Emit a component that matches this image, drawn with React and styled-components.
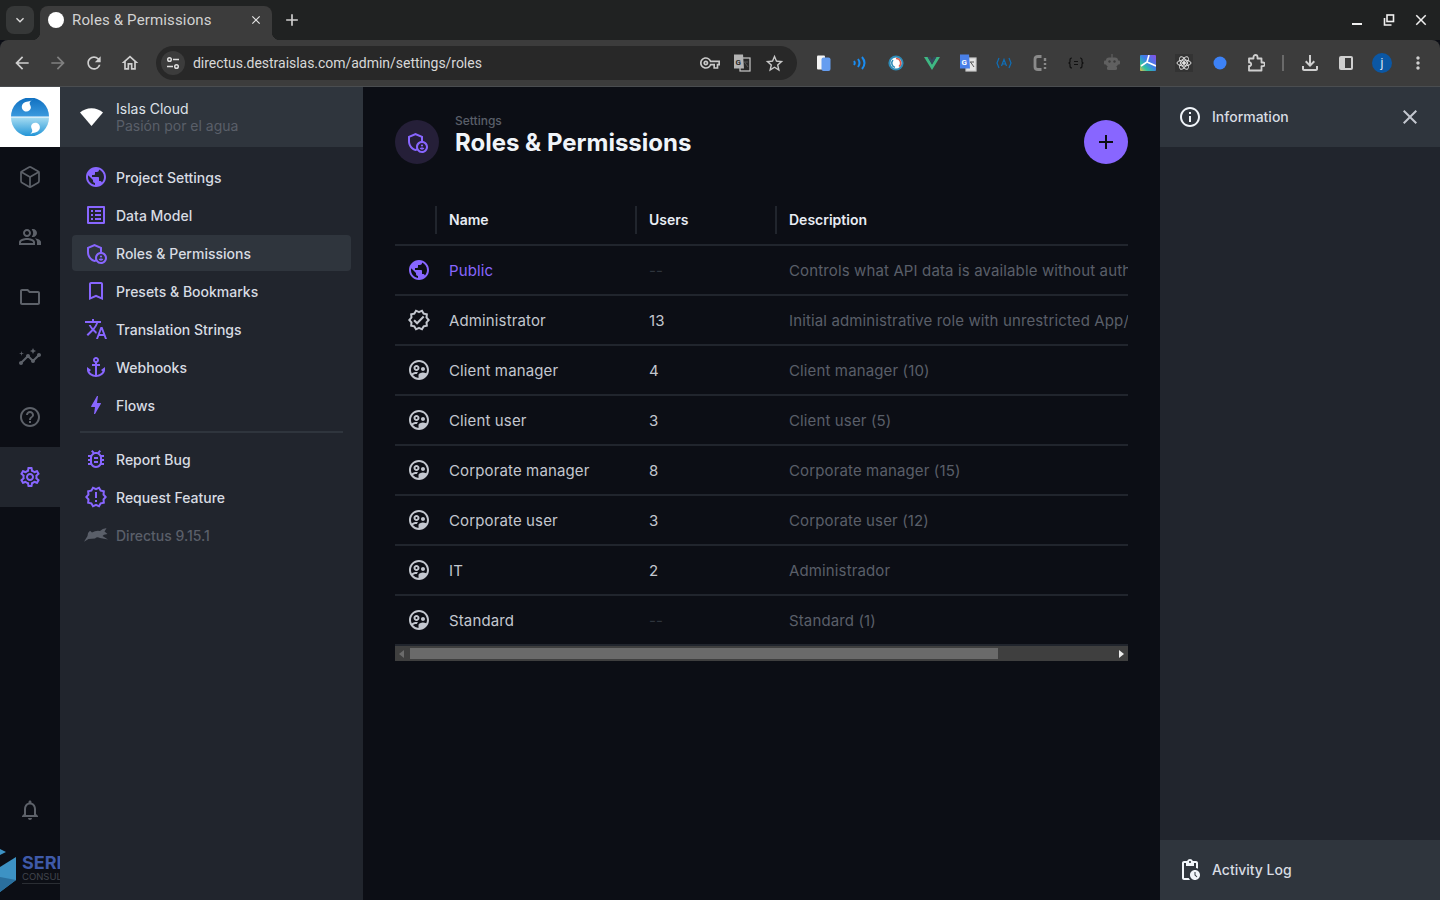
import React from "react";
import styled, { createGlobalStyle } from "styled-components";
import { Box } from "lucide-react";
import {
  MdAdd,
  MdAnchor,
  MdArrowBack,
  MdArrowForward,
  MdBolt,
  MdBookmarkBorder,
  MdClose,
  MdExpandMore,
  MdHelpOutline,
  MdInsights,
  MdMoreVert,
  MdOutlineAdminPanelSettings,
  MdOutlineBugReport,
  MdOutlineFileDownload,
  MdOutlineFolder,
  MdOutlineHome,
  MdOutlineInfo,
  MdOutlineListAlt,
  MdOutlineNewReleases,
  MdOutlineNotifications,
  MdOutlinePendingActions,
  MdOutlinePeopleAlt,
  MdOutlineSettings,
  MdOutlineStarBorder,
  MdOutlineSupervisedUserCircle,
  MdOutlineVerified,
  MdOutlineVpnKey,
  MdPublic,
  MdRefresh,
  MdTranslate,
} from "react-icons/md";

const Global = createGlobalStyle`
  html, body { margin: 0; padding: 0; background: #0c0e15; }
  body { font-family: "Inter", "Liberation Sans", sans-serif; overflow: hidden; }
  * { box-sizing: border-box; }
`;

const Page = styled.div`
  width: 1440px;
  height: 900px;
  display: flex;
  flex-direction: column;
  overflow: hidden;
`;

/* browser chrome */
const TabStrip = styled.div`
  height: 40px;
  flex: none;
  background: #202222;
  display: flex;
  align-items: flex-end;
  padding-left: 6px;
  font-family: "Roboto", "Liberation Sans", sans-serif;
`;

const TabSearch = styled.div`
  width: 28px;
  height: 28px;
  margin: 0 6px 6px 0;
  border-radius: 8px;
  background: #363838;
  color: #dcdcdc;
  display: flex;
  align-items: center;
  justify-content: center;
`;

const Tab = styled.div`
  position: relative;
  width: 232px;
  height: 34px;
  background: #3c3c3c;
  border-radius: 8px 8px 0 0;
  display: flex;
  align-items: center;
  padding: 0 9px 6px 8px;
  color: #d2d2d2;
  font-size: 15px;
  letter-spacing: 0.15px;
  &::before,
  &::after {
    content: "";
    position: absolute;
    bottom: 0;
    width: 8px;
    height: 8px;
    background: radial-gradient(circle at 0 0, #202222 8px, #3c3c3c 8.5px);
  }
  &::before {
    left: -8px;
  }
  &::after {
    right: -8px;
    transform: scaleX(-1);
  }
`;

const Favicon = styled.span`
  width: 16px;
  height: 16px;
  border-radius: 50%;
  background: #fff;
  margin-right: 8px;
  flex: none;
`;

const TabTitle = styled.span`
  flex: 1;
`;

const NewTab = styled.div`
  margin: 0 0 3px 10px;
  height: 34px;
  display: flex;
  align-items: center;
  color: #d0d0d0;
`;

const WindowControls = styled.div`
  margin-left: auto;
  height: 40px;
  display: flex;
  align-items: center;
  padding-right: 3px;
  color: #f0f0f0;
`;

const WindowButton = styled.span`
  width: 32px;
  display: flex;
  justify-content: center;
`;

const Toolbar = styled.div`
  height: 47px;
  flex: none;
  background: #3c3c3c;
  border-radius: 8px 8px 0 0;
  border-bottom: 1px solid #4a4d50;
  display: flex;
  align-items: center;
  padding: 0 4px;
  font-family: "Roboto", "Liberation Sans", sans-serif;
`;

const ToolButton = styled.span`
  width: 36px;
  height: 36px;
  flex: none;
  display: flex;
  align-items: center;
  justify-content: center;
  color: ${({ $dim }) => ($dim ? "#808080" : "#cfcfcf")};
`;

const Omnibox = styled.div`
  width: 641px;
  height: 34px;
  margin: 0 9px 0 8px;
  flex: none;
  border-radius: 17px;
  background: #282828;
  display: flex;
  align-items: center;
  padding: 0 7px 0 5px;
  color: #d8d8d8;
  font-size: 14px;
  letter-spacing: -0.03px;
`;

const SiteInfo = styled.span`
  width: 24px;
  height: 24px;
  border-radius: 50%;
  background: #3c3c3c;
  margin-right: 8px;
  flex: none;
  display: flex;
  align-items: center;
  justify-content: center;
`;

const Url = styled.span`
  flex: 1;
`;

const OmniIcon = styled.span`
  width: 32px;
  display: flex;
  justify-content: center;
  color: #c8c8c8;
`;

const ToolSeparator = styled.span`
  width: 2px;
  height: 16px;
  margin: 0 8px;
  background: #6a6a6a;
  flex: none;
`;

const Avatar = styled.span`
  width: 20px;
  height: 20px;
  border-radius: 50%;
  background: #0b57a4;
  color: #dfe8f5;
  font-size: 12px;
  display: flex;
  align-items: center;
  justify-content: center;
`;

/* app */
const App_Body = styled.div`
  flex: 1;
  display: flex;
  min-height: 0;
`;

const ModuleBar = styled.nav`
  width: 60px;
  flex: none;
  background: #0c0e15;
  display: flex;
  flex-direction: column;
  overflow: hidden;
`;

const LogoCell = styled.div`
  width: 60px;
  height: 60px;
  background: #fff;
  display: flex;
  align-items: center;
  justify-content: center;
  flex: none;
`;

const Module = styled.div`
  width: 60px;
  height: 60px;
  flex: none;
  display: flex;
  align-items: center;
  justify-content: center;
  color: ${({ $active }) => ($active ? "#8866ff" : "#5d6169")};
  background: ${({ $active }) => ($active ? "#21252d" : "transparent")};
`;

const ModuleBell = styled(Module)`
  margin-top: auto;
`;

const BrandCell = styled.div`
  width: 60px;
  height: 60px;
  flex: none;
`;

const Sidebar = styled.aside`
  width: 303px;
  flex: none;
  background: #21252d;
  display: flex;
  flex-direction: column;
`;

const ProjectHeader = styled.div`
  height: 60px;
  flex: none;
  background: #2f353d;
  display: flex;
  align-items: center;
  padding-left: 20px;
  gap: 12px;
`;

const ProjectText = styled.div`
  display: flex;
  flex-direction: column;
  font-size: 14px;
  line-height: 17px;
  color: #dde1e8;
  margin-left: 1px;
`;

const ProjectSub = styled.span`
  color: #5a5f69;
`;

const SideList = styled.div`
  padding: 12px 12px 0;
  display: flex;
  flex-direction: column;
  gap: 2px;
`;

const SideItem = styled.div`
  height: 36px;
  border-radius: 4px;
  display: flex;
  align-items: center;
  padding-left: 12px;
  gap: 8px;
  font-size: 14px;
  font-weight: 500;
  color: ${({ $muted }) => ($muted ? "#5a5f69" : "#d8dce3")};
  background: ${({ $active }) => ($active ? "#2f353d" : "transparent")};
  svg {
    color: ${({ $muted }) => ($muted ? "#5a5f69" : "#8866ff")};
    flex: none;
  }
`;

const SideDivider = styled.hr`
  border: 0;
  height: 2px;
  margin: 6px 8px;
  background: #2f353d;
  width: calc(100% - 16px);
`;

const Main = styled.main`
  flex: 1;
  min-width: 0;
  background: #0c0e15;
  padding: 0 32px;
`;

const PageHeader = styled.header`
  height: 108px;
  display: flex;
  align-items: center;
  padding-bottom: 2px;
`;

const TitleIcon = styled.div`
  width: 44px;
  height: 44px;
  border-radius: 50%;
  background: #251f38;
  color: #8866ff;
  display: flex;
  align-items: center;
  justify-content: center;
  margin: 4px 16px 0 0;
  flex: none;
`;

const TitleBlock = styled.div`
  display: flex;
  flex-direction: column;
  flex: 1;
  margin-bottom: 9px;
`;

const Breadcrumb = styled.span`
  font-size: 12px;
  line-height: 14px;
  font-weight: 500;
  color: #5a5f69;
`;

const Title = styled.h1`
  margin: 0;
  font-size: 24px;
  line-height: 29px;
  font-weight: 700;
  color: #f0f4f9;
`;

const AddButton = styled.div`
  width: 44px;
  height: 44px;
  margin-top: 4px;
  border-radius: 50%;
  background: #8866ff;
  color: #0c0e15;
  display: flex;
  align-items: center;
  justify-content: center;
  flex: none;
`;

const Table = styled.div`
  width: 733px;
  overflow: hidden;
`;

const Row = styled.div`
  display: grid;
  grid-template-columns: 40px 200px 140px 1fr;
  height: ${({ $head }) => ($head ? "51px" : "50px")};
  border-bottom: 2px solid #21252d;
  align-items: center;
  font-size: 15px;
  letter-spacing: 0.13px;
  color: #c3c7cf;
`;

const HeadCell = styled.div`
  height: 28px;
  border-left: 2px solid #21252d;
  padding-left: 12px;
  display: flex;
  align-items: center;
  font-size: 14px;
  font-weight: 600;
  letter-spacing: 0;
  color: #e8ecf3;
`;

const IconCell = styled.div`
  padding-left: 12px;
  display: flex;
  color: ${({ $public }) => ($public ? "#8866ff" : "#c3c7cf")};
`;

const Cell = styled.div`
  padding-left: 14px;
  white-space: nowrap;
  overflow: hidden;
  color: ${({ $public, $muted }) =>
    $public ? "#8866ff" : $muted ? "#5a5f69" : "inherit"};
  ${({ $faint }) => $faint && "color: #2f353d;"}
`;

const ScrollBar = styled.div`
  height: 15px;
  background: #3f3f3f;
  display: flex;
  align-items: center;
  padding: 0 4px;
`;

const Arrow = styled.span`
  width: 0;
  height: 0;
  border-top: 4px solid transparent;
  border-bottom: 4px solid transparent;
  ${({ $left }) =>
    $left ? "border-right: 5px solid #6b6b6b;" : "border-left: 5px solid #ececec;"}
  flex: none;
`;

const Thumb = styled.span`
  width: 588px;
  height: 11px;
  margin: 0 auto 0 6px;
  background: #6a6a6a;
`;

const InfoPanel = styled.aside`
  width: 280px;
  flex: none;
  background: #21252d;
  display: flex;
  flex-direction: column;
`;

const InfoHeader = styled.div`
  height: 60px;
  flex: none;
  background: #2f353d;
  display: flex;
  align-items: center;
  padding: 0 18px;
  gap: 10px;
  font-size: 14px;
  font-weight: 500;
  color: #d8dce3;
`;

const InfoLabel = styled.span`
  margin-bottom: 2px;
`;

const CloseIcon = styled.span`
  margin-left: auto;
  display: flex;
  color: #c3c7cf;
`;

const InfoBody = styled.div`
  flex: 1;
`;

const Rabbit = () => (
  <svg width="24" height="24" viewBox="0 0 24 24" fill="currentColor">
    <path d="M0 18.7L3.5 13Q3.5 9.5 6 7.8L8 9.5Q12 7.2 16 8 19 5 22.5 5.3L20.5 8.5 23.5 11 20 11.8 18.5 13 24 16.5 16 15Q13 13.5 11 15.5L4.5 16z" />
  </svg>
);

const WifiMark = () => (
  <svg width="23" height="18" viewBox="0 0 23 18" fill="#fff">
    <path d="M11.5 18 0 4.6C3 1.8 7 .2 11.5.2S20 1.8 23 4.6z" />
  </svg>
);

const IslandLogo = () => (
  <svg width="38" height="38" viewBox="0 0 38 38">
    <defs>
      <linearGradient id="top" x1="0" y1="0" x2="0" y2="1">
        <stop offset="0" stopColor="#0f6fc0" />
        <stop offset="1" stopColor="#3b9ade" />
      </linearGradient>
      <linearGradient id="bottom" x1="0" y1="0" x2="0" y2="1">
        <stop offset="0" stopColor="#a6dcf2" />
        <stop offset="1" stopColor="#1f93d6" />
      </linearGradient>
    </defs>
    <path d="M0 18.5A19 19 0 0 1 38 18.5z" fill="url(#top)" />
    <path d="M0 19.5A19 19 0 0 0 38 19.5z" fill="url(#bottom)" />
    <path d="M21.5 1c-1 3-5 1.8-8 3.6-3.4 2-3.6 6.2-.4 8.4 3 1.6 6.8-.4 6.8-3.4 0-2.2-1.6-3-1.2-4.8.3-1.4 2-2.2 2.8-3.8z" fill="#fff" />
    <path d="M19 37c1-2.6 4.6-1.8 7.6-3.6 3.2-2 3-6.6-.1-8.2-3-1.4-6.4.4-6.4 3.2 0 2 1.5 3 1.1 4.8-.3 1.3-1.6 2.2-2.2 3.8z" fill="#fff" />
  </svg>
);

const BrandMark = () => (
  <svg width="60" height="60" viewBox="0 0 60 60">
    <path d="M0 9l6 3-6 3z" fill="#3d92c4" />
    <path d="M0 27L16 17V40L0 52z" fill="#3d92c4" />
    <path d="M0 37l16 3L0 52z" fill="#2a6f9e" />
    <text x="22" y="29" fontFamily="Inter, sans-serif" fontWeight="700" fontSize="18" fill="#3f5aa8">
      SERI
    </text>
    <text x="22" y="40" fontFamily="Inter, sans-serif" fontSize="9.5" fill="#41454d">
      CONSULTING
    </text>
    <path d="M22 43.5h38" stroke="#2a2d33" strokeWidth="1" />
  </svg>
);

const TranslatePage = ({ color }) => (
  <svg width="20" height="20" viewBox="0 0 20 20">
    <rect x="8" y="5" width="10" height="13" fill={color === "blue" ? "#e4e4e4" : "none"} stroke="#c8c8c8" strokeWidth="1.2" />
    <path d="M2 1.5h9l1 14H2z" fill={color === "blue" ? "#4a80e8" : "#b4b4b4"} />
    <text x="3.6" y="11.5" fontFamily="Roboto, sans-serif" fontWeight="700" fontSize="8" fill={color === "blue" ? "#fff" : "#282828"}>
      G
    </text>
    <path d="M12.5 9l3.5 5M16 9h-4" stroke="#555" strokeWidth="1" fill="none" />
  </svg>
);

/* extension icons on the toolbar */
const extensions = [
  <svg width="16" height="18" viewBox="0 0 16 18">
    <rect x="1" y="1.5" width="8" height="14" rx="1" fill="#f5f5f5" />
    <rect x="5.5" y="3.5" width="9" height="13.5" rx="2" fill="#659df0" />
  </svg>,
  <svg width="16" height="16" viewBox="0 0 16 16" fill="none" stroke="#1a8cf0" strokeWidth="2">
    <path d="M2 6q1.5 2 0 4M6 4q3 4 0 8M10 2q5 6 0 12" />
  </svg>,
  <svg width="16" height="16" viewBox="0 0 16 16" fill="none">
    <circle cx="8" cy="8" r="7.6" fill="#2d8bb8" />
    <circle cx="8" cy="8" r="5.5" fill="#fff" />
    <path d="M8 3.5a4.5 4.5 0 0 1 3 8" stroke="#e0584a" strokeWidth="1.5" />
    <path d="M7 12.4A4.5 4.5 0 0 1 5 5" stroke="#2d8bb8" strokeWidth="1.5" />
  </svg>,
  <svg width="16" height="16" viewBox="0 0 16 16">
    <path d="M0 2h3.6L8 9.5 12.4 2H16L8 15z" fill="#3fb883" />
    <path d="M3.6 2h2.6L8 5l1.8-3h2.6L8 9.5z" fill="#34495e" />
  </svg>,
  <TranslatePage color="blue" />,
  <svg width="16" height="16" viewBox="0 0 16 16" fill="none" stroke="#0f6fb8" strokeWidth="1.2">
    <path d="M3 3 1 8l2 5M13 3l2 5-2 5M5.5 11 8 4.5l2.5 6.5M6.3 9h3.4" />
  </svg>,
  <svg width="16" height="18" viewBox="0 0 16 18" fill="none" stroke="#8a8a8a" strokeWidth="2.8">
    <path d="M9.5 2.5H6Q3 2.5 3 5v8q0 2.500 3 2.500h3.500" />
    <path d="M13 4v3M13 9v2M13 13v2" strokeWidth="2.4" />
  </svg>,
  <svg width="16" height="12" viewBox="0 0 16 12" fill="none" stroke="#111" strokeWidth="1.2">
    <path d="M4 1Q2 1 2 3v2L1 6l1 1v2q0 2 2 2M12 1q2 0 2 2v2l1 1-1 1v2q0 2-2 2M6 4.500h4M6 7.500h4" />
  </svg>,
  <svg width="18" height="18" viewBox="0 0 18 18" fill="#606060">
    <rect x="8.400" y="0" width="1.200" height="4" />
    <rect x="3" y="3.500" width="12" height="9" rx="3" />
    <rect x="1" y="6.500" width="16" height="4" rx="1" />
    <rect x="4" y="12" width="10" height="4" rx="1.500" />
    <circle cx="6.500" cy="7.500" r="1.200" fill="#3c3c3c" />
    <circle cx="11.500" cy="7.500" r="1.200" fill="#3c3c3c" />
  </svg>,
  <svg width="16" height="16" viewBox="0 0 16 16">
    <defs>
      <linearGradient id="ext" x1="1" y1="0" x2="0" y2="1">
        <stop offset="0" stopColor="#8a4fe8" />
        <stop offset="0.45" stopColor="#3c7fe8" />
        <stop offset="0.75" stopColor="#2fc4a0" />
        <stop offset="1" stopColor="#e8b84a" />
      </linearGradient>
    </defs>
    <rect width="16" height="16" rx="1" fill="url(#ext)" />
    <path d="M9 0 7 7l-6 4M7 7l9 4" stroke="#fff" strokeWidth="1.600" fill="none" />
  </svg>,
  <svg width="18" height="18" viewBox="0 0 18 18" fill="none" stroke="#e0e0e0" strokeWidth="1">
    <rect width="18" height="18" fill="#333" stroke="none" />
    <ellipse cx="9" cy="9" rx="7" ry="3" />
    <ellipse cx="9" cy="9" rx="7" ry="3" transform="rotate(60 9 9)" />
    <ellipse cx="9" cy="9" rx="7" ry="3" transform="rotate(120 9 9)" />
    <circle cx="9" cy="9" r="1.400" fill="#e0e0e0" />
  </svg>,
  <svg width="14" height="14" viewBox="0 0 14 14">
    <circle cx="7" cy="7" r="6.500" fill="#3d82f6" />
  </svg>,
  <svg width="18" height="18" viewBox="0 0 18 18" fill="none" stroke="#cfcfcf" strokeWidth="1.800" strokeLinejoin="round">
    <path d="M2 4.500h4.500V3a2 2 0 0 1 4 0v1.500h4v4H16a1.800 1.800 0 0 1 0 3.600h-1.500v4.400H2v-4.500h1.200a2 2 0 0 0 0-3.500H2z" />
  </svg>,
];

const sideItems = [
  { label: "Project Settings", icon: MdPublic },
  { label: "Data Model", icon: MdOutlineListAlt },
  { label: "Roles & Permissions", icon: MdOutlineAdminPanelSettings, active: true },
  { label: "Presets & Bookmarks", icon: MdBookmarkBorder },
  { label: "Translation Strings", icon: MdTranslate },
  { label: "Webhooks", icon: MdAnchor },
  { label: "Flows", icon: MdBolt },
];

const roles = [
  { name: "Public", users: "--", description: "Controls what API data is available without authenticating", icon: MdPublic, isPublic: true },
  { name: "Administrator", users: "13", description: "Initial administrative role with unrestricted App/API access", icon: MdOutlineVerified },
  { name: "Client manager", users: "4", description: "Client manager (10)" },
  { name: "Client user", users: "3", description: "Client user (5)" },
  { name: "Corporate manager", users: "8", description: "Corporate manager (15)" },
  { name: "Corporate user", users: "3", description: "Corporate user (12)" },
  { name: "IT", users: "2", description: "Administrador" },
  { name: "Standard", users: "--", description: "Standard (1)" },
];

const App = () => (
  <Page>
    <Global />
    <TabStrip>
      <TabSearch>
        <MdExpandMore size={16} />
      </TabSearch>
      <Tab>
        <Favicon />
        <TabTitle>Roles &amp; Permissions</TabTitle>
        <MdClose size={14} color="#e4e4e4" />
      </Tab>
      <NewTab>
        <MdAdd size={20} />
      </NewTab>
      <WindowControls>
        <WindowButton>
          <svg width="12" height="12" viewBox="0 0 12 12" fill="#f0f0f0">
            <rect x="1" y="9" width="10" height="2" />
          </svg>
        </WindowButton>
        <WindowButton>
          <svg width="12" height="12" viewBox="0 0 12 12" fill="none" stroke="#f0f0f0" strokeWidth="1.600">
            <rect x="4" y="1" width="6.500" height="6.500" />
            <path d="M1.500 4v7h7" />
          </svg>
        </WindowButton>
        <WindowButton>
          <MdClose size={18} />
        </WindowButton>
      </WindowControls>
    </TabStrip>
    <Toolbar>
      <ToolButton>
        <MdArrowBack size={20} />
      </ToolButton>
      <ToolButton $dim>
        <MdArrowForward size={20} />
      </ToolButton>
      <ToolButton>
        <MdRefresh size={20} />
      </ToolButton>
      <ToolButton>
        <MdOutlineHome size={20} />
      </ToolButton>
      <Omnibox>
        <SiteInfo>
          <svg width="14" height="14" viewBox="0 0 14 14" fill="none" stroke="#dedede" strokeWidth="1.500">
            <circle cx="3.500" cy="3.500" r="1.800" />
            <path d="M7 3.500h6M1 10.500h6" />
            <circle cx="10.500" cy="10.500" r="1.800" />
          </svg>
        </SiteInfo>
        <Url>directus.destraislas.com/admin/settings/roles</Url>
        <OmniIcon>
          <MdOutlineVpnKey size={20} />
        </OmniIcon>
        <OmniIcon>
          <TranslatePage />
        </OmniIcon>
        <OmniIcon>
          <MdOutlineStarBorder size={21} />
        </OmniIcon>
      </Omnibox>
      {extensions.map((icon, i) => (
        <ToolButton key={i}>{icon}</ToolButton>
      ))}
      <ToolSeparator />
      <ToolButton>
        <MdOutlineFileDownload size={24} />
      </ToolButton>
      <ToolButton>
        <svg width="16" height="16" viewBox="0 0 16 16">
          <rect x="1" y="1" width="14" height="14" rx="2" fill="#cfcfcf" />
          <rect x="7" y="3" width="6" height="10" fill="#3c3c3c" />
        </svg>
      </ToolButton>
      <ToolButton>
        <Avatar>j</Avatar>
      </ToolButton>
      <ToolButton>
        <MdMoreVert size={20} />
      </ToolButton>
    </Toolbar>
    <App_Body>
      <ModuleBar>
        <LogoCell>
          <IslandLogo />
        </LogoCell>
        <Module>
          <Box size={24} strokeWidth={1.7} />
        </Module>
        <Module>
          <MdOutlinePeopleAlt size={24} />
        </Module>
        <Module>
          <MdOutlineFolder size={24} />
        </Module>
        <Module>
          <MdInsights size={24} />
        </Module>
        <Module>
          <MdHelpOutline size={24} />
        </Module>
        <Module $active>
          <MdOutlineSettings size={24} />
        </Module>
        <ModuleBell>
          <MdOutlineNotifications size={24} />
        </ModuleBell>
        <BrandCell>
          <BrandMark />
        </BrandCell>
      </ModuleBar>
      <Sidebar>
        <ProjectHeader>
          <WifiMark />
          <ProjectText>
            <span>Islas Cloud</span>
            <ProjectSub>Pasión por el agua</ProjectSub>
          </ProjectText>
        </ProjectHeader>
        <SideList>
          {sideItems.map(({ label, icon: Icon, active }) => (
            <SideItem key={label} $active={active}>
              <Icon size={24} />
              {label}
            </SideItem>
          ))}
          <SideDivider />
          <SideItem>
            <MdOutlineBugReport size={24} />
            Report Bug
          </SideItem>
          <SideItem>
            <MdOutlineNewReleases size={24} />
            Request Feature
          </SideItem>
          <SideItem $muted>
            <Rabbit />
            Directus 9.15.1
          </SideItem>
        </SideList>
      </Sidebar>
      <Main>
        <PageHeader>
          <TitleIcon>
            <MdOutlineAdminPanelSettings size={24} />
          </TitleIcon>
          <TitleBlock>
            <Breadcrumb>Settings</Breadcrumb>
            <Title>Roles &amp; Permissions</Title>
          </TitleBlock>
          <AddButton>
            <MdAdd size={24} />
          </AddButton>
        </PageHeader>
        <Table>
          <Row $head>
            <span />
            <HeadCell>Name</HeadCell>
            <HeadCell>Users</HeadCell>
            <HeadCell>Description</HeadCell>
          </Row>
          {roles.map(({ name, users, description, icon: Icon = MdOutlineSupervisedUserCircle, isPublic }) => (
            <Row key={name}>
              <IconCell $public={isPublic}>
                <Icon size={24} />
              </IconCell>
              <Cell $public={isPublic}>{name}</Cell>
              <Cell $faint={users === "--"}>{users}</Cell>
              <Cell $muted>{description}</Cell>
            </Row>
          ))}
          <ScrollBar>
            <Arrow $left />
            <Thumb />
            <Arrow />
          </ScrollBar>
        </Table>
      </Main>
      <InfoPanel>
        <InfoHeader>
          <MdOutlineInfo size={24} color="#f0f4f9" />
          <InfoLabel>Information</InfoLabel>
          <CloseIcon>
            <MdClose size={24} />
          </CloseIcon>
        </InfoHeader>
        <InfoBody />
        <InfoHeader>
          <MdOutlinePendingActions size={24} color="#f0f4f9" />
          <InfoLabel>Activity Log</InfoLabel>
        </InfoHeader>
      </InfoPanel>
    </App_Body>
  </Page>
);

export default App;
